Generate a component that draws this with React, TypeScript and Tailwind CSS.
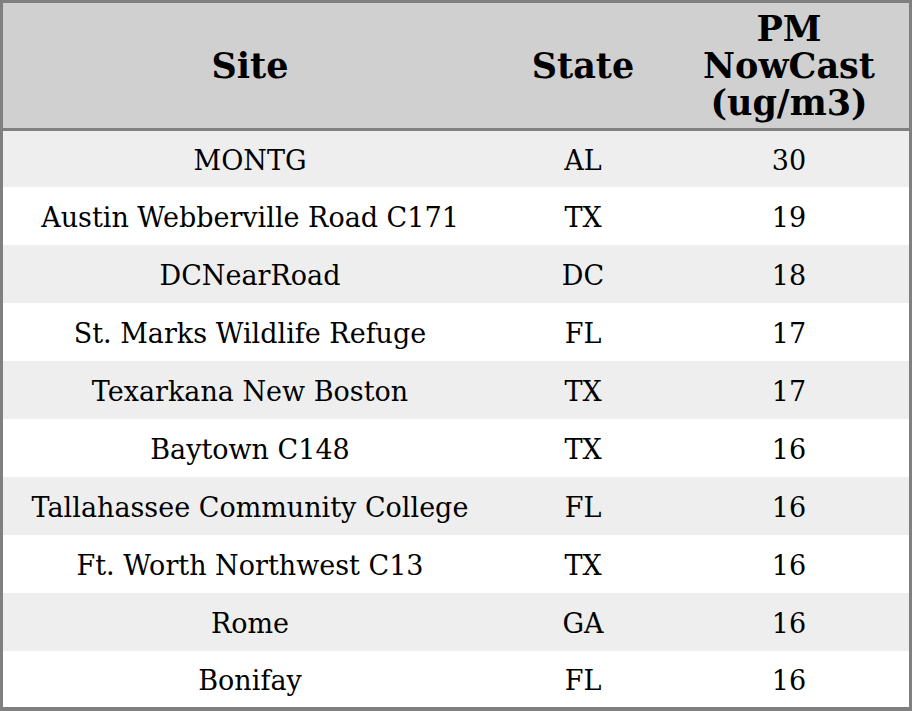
const rows = [
  { site: 'MONTG', state: 'AL', pm: 30 },
  { site: 'Austin Webberville Road C171', state: 'TX', pm: 19 },
  { site: 'DCNearRoad', state: 'DC', pm: 18 },
  { site: 'St. Marks Wildlife Refuge', state: 'FL', pm: 17 },
  { site: 'Texarkana New Boston', state: 'TX', pm: 17 },
  { site: 'Baytown C148', state: 'TX', pm: 16 },
  { site: 'Tallahassee Community College', state: 'FL', pm: 16 },
  { site: 'Ft. Worth Northwest C13', state: 'TX', pm: 16 },
  { site: 'Rome', state: 'GA', pm: 16 },
  { site: 'Bonifay', state: 'FL', pm: 16 },
];

export default function App() {
  return (
    <div className="w-[912px] h-[711px] bg-white font-['DejaVu_Serif',serif] text-black">
      <div className="border-[3px] border-b-4 border-[#808080]">
        <div className="grid grid-cols-[494px_172px_240px] h-[128px] bg-[#d0d0d0] border-b-[3px] border-[#808080] text-[35px] leading-[37px] font-bold text-center items-center">
          <div>Site</div>
          <div>State</div>
          <div className="px-4">PM NowCast (ug/m3)</div>
        </div>
        {rows.map((r, i) => (
          <div
            key={r.site}
            className={
              'grid grid-cols-[494px_172px_240px] items-center text-center text-[27px] pt-1 ' +
              (i % 2 === 0 ? 'bg-[#eeeeee] ' : 'bg-white ') +
              (i === 0 || i === rows.length - 1 ? 'h-[56px]' : 'h-[58px]')
            }
          >
            <div>{r.site}</div>
            <div>{r.state}</div>
            <div>{r.pm}</div>
          </div>
        ))}
      </div>
    </div>
  );
}
